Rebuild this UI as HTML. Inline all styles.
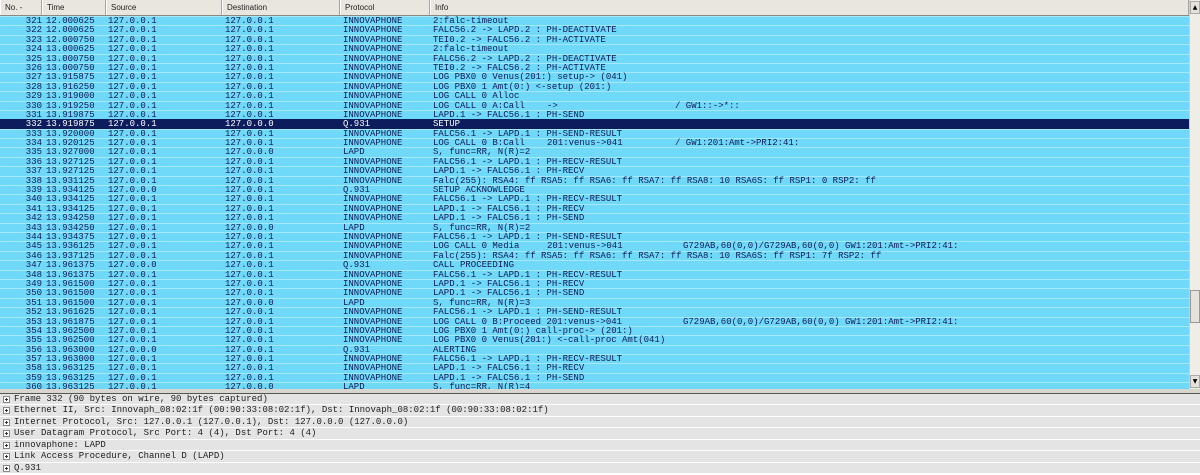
<!DOCTYPE html>
<html><head><meta charset="utf-8">
<style>
*{margin:0;padding:0;box-sizing:border-box}
body{width:1200px;height:475px;overflow:hidden;background:#fff;position:relative;font-family:"Liberation Mono",monospace}
#hdr{position:absolute;left:0;top:0;width:1189px;height:16px;background:#e8e6de;border-bottom:1px solid #8a8880;font:8px "Liberation Sans",sans-serif;color:#222}
#hdr div{position:absolute;top:0;height:15px;line-height:15px;padding-left:4px;border-right:1px solid #a8a69e;border-left:1px solid #fff}
#list{position:absolute;left:0;top:16px;width:1189px;height:374px;background:#70d8f8;overflow:hidden}
.r{height:9.4px;position:relative;border-top:1px solid #a4e8fc;font-size:9px;line-height:8px;color:#101c58;white-space:pre}
.r.sel{background:#0c1c5c;color:#fff;border-top-color:#0c1c5c}
.r span{position:absolute;top:0}
.no{left:0;width:42px;text-align:right}
.t{left:46px}.s{left:108px}.d{left:225px}.p{left:343px}.i{left:433px}
.b{left:547px}.c{left:675px}.e{left:683px}
#sb{position:absolute;left:1189px;top:0;width:11px;height:390px;background:#eeede6;border-left:1px solid #ccc}
#sb .a{position:absolute;left:0;width:10px;height:13px;background:#e4e2da;border:1px solid #aaa;font-size:6px;line-height:11px;text-align:center;color:#000;font-family:"DejaVu Sans",sans-serif}
#sb .th{position:absolute;left:0;top:290px;width:10px;height:33px;background:#e4e2da;border:1px solid #999}
#split{position:absolute;left:0;top:389px;width:1200px;height:5px;background:#d8d6ce;border-bottom:1px solid #555}
#tree{position:absolute;left:0;top:394px;width:1200px}
.n{height:11.45px;background:#e4e4e4;border-bottom:1px solid #fff;font-size:9px;line-height:10px;color:#222;padding-left:14px;position:relative;white-space:pre}
.n i{position:absolute;left:3px;top:2px;width:7px;height:7px;border:1px solid #888;background:#fff}
.n i:before{content:"";position:absolute;left:1px;top:2px;width:3px;height:1px;background:#333}
.n i:after{content:"";position:absolute;left:2px;top:1px;width:1px;height:3px;background:#333}
</style></head><body>
<div id="hdr">
<div style="left:0;width:42px">No. -</div>
<div style="left:42px;width:64px">Time</div>
<div style="left:106px;width:116px">Source</div>
<div style="left:222px;width:118px">Destination</div>
<div style="left:340px;width:90px">Protocol</div>
<div style="left:430px;width:759px">Info</div>
</div>
<div id="list">
<div class="r"><span class="no">321</span><span class="t">12.000625</span><span class="s">127.0.0.1</span><span class="d">127.0.0.1</span><span class="p">INNOVAPHONE</span><span class="i">2:falc-timeout</span></div>
<div class="r"><span class="no">322</span><span class="t">12.000625</span><span class="s">127.0.0.1</span><span class="d">127.0.0.1</span><span class="p">INNOVAPHONE</span><span class="i">FALC56.2 -> LAPD.2 : PH-DEACTIVATE</span></div>
<div class="r"><span class="no">323</span><span class="t">12.000750</span><span class="s">127.0.0.1</span><span class="d">127.0.0.1</span><span class="p">INNOVAPHONE</span><span class="i">TEI0.2 -> FALC56.2 : PH-ACTIVATE</span></div>
<div class="r"><span class="no">324</span><span class="t">13.000625</span><span class="s">127.0.0.1</span><span class="d">127.0.0.1</span><span class="p">INNOVAPHONE</span><span class="i">2:falc-timeout</span></div>
<div class="r"><span class="no">325</span><span class="t">13.000750</span><span class="s">127.0.0.1</span><span class="d">127.0.0.1</span><span class="p">INNOVAPHONE</span><span class="i">FALC56.2 -> LAPD.2 : PH-DEACTIVATE</span></div>
<div class="r"><span class="no">326</span><span class="t">13.000750</span><span class="s">127.0.0.1</span><span class="d">127.0.0.1</span><span class="p">INNOVAPHONE</span><span class="i">TEI0.2 -> FALC56.2 : PH-ACTIVATE</span></div>
<div class="r"><span class="no">327</span><span class="t">13.915875</span><span class="s">127.0.0.1</span><span class="d">127.0.0.1</span><span class="p">INNOVAPHONE</span><span class="i">LOG PBX0 0 Venus(201:) setup-> (041)</span></div>
<div class="r"><span class="no">328</span><span class="t">13.916250</span><span class="s">127.0.0.1</span><span class="d">127.0.0.1</span><span class="p">INNOVAPHONE</span><span class="i">LOG PBX0 1 Amt(0:) &lt;-setup (201:)</span></div>
<div class="r"><span class="no">329</span><span class="t">13.919000</span><span class="s">127.0.0.1</span><span class="d">127.0.0.1</span><span class="p">INNOVAPHONE</span><span class="i">LOG CALL 0 Alloc</span></div>
<div class="r"><span class="no">330</span><span class="t">13.919250</span><span class="s">127.0.0.1</span><span class="d">127.0.0.1</span><span class="p">INNOVAPHONE</span><span class="i">LOG CALL 0 A:Call</span><span class="b">-></span><span class="c">/ GW1::->*::</span></div>
<div class="r"><span class="no">331</span><span class="t">13.919875</span><span class="s">127.0.0.1</span><span class="d">127.0.0.1</span><span class="p">INNOVAPHONE</span><span class="i">LAPD.1 -> FALC56.1 : PH-SEND</span></div>
<div class="r sel"><span class="no">332</span><span class="t">13.919875</span><span class="s">127.0.0.1</span><span class="d">127.0.0.0</span><span class="p">Q.931</span><span class="i">SETUP</span></div>
<div class="r"><span class="no">333</span><span class="t">13.920000</span><span class="s">127.0.0.1</span><span class="d">127.0.0.1</span><span class="p">INNOVAPHONE</span><span class="i">FALC56.1 -> LAPD.1 : PH-SEND-RESULT</span></div>
<div class="r"><span class="no">334</span><span class="t">13.920125</span><span class="s">127.0.0.1</span><span class="d">127.0.0.1</span><span class="p">INNOVAPHONE</span><span class="i">LOG CALL 0 B:Call</span><span class="b">201:venus->041</span><span class="c">/ GW1:201:Amt->PRI2:41:</span></div>
<div class="r"><span class="no">335</span><span class="t">13.927000</span><span class="s">127.0.0.1</span><span class="d">127.0.0.0</span><span class="p">LAPD</span><span class="i">S, func=RR, N(R)=2</span></div>
<div class="r"><span class="no">336</span><span class="t">13.927125</span><span class="s">127.0.0.1</span><span class="d">127.0.0.1</span><span class="p">INNOVAPHONE</span><span class="i">FALC56.1 -> LAPD.1 : PH-RECV-RESULT</span></div>
<div class="r"><span class="no">337</span><span class="t">13.927125</span><span class="s">127.0.0.1</span><span class="d">127.0.0.1</span><span class="p">INNOVAPHONE</span><span class="i">LAPD.1 -> FALC56.1 : PH-RECV</span></div>
<div class="r"><span class="no">338</span><span class="t">13.931125</span><span class="s">127.0.0.1</span><span class="d">127.0.0.1</span><span class="p">INNOVAPHONE</span><span class="i">Falc(255): RSA4: ff RSA5: ff RSA6: ff RSA7: ff RSA8: 10 RSA6S: ff RSP1: 0 RSP2: ff</span></div>
<div class="r"><span class="no">339</span><span class="t">13.934125</span><span class="s">127.0.0.0</span><span class="d">127.0.0.1</span><span class="p">Q.931</span><span class="i">SETUP ACKNOWLEDGE</span></div>
<div class="r"><span class="no">340</span><span class="t">13.934125</span><span class="s">127.0.0.1</span><span class="d">127.0.0.1</span><span class="p">INNOVAPHONE</span><span class="i">FALC56.1 -> LAPD.1 : PH-RECV-RESULT</span></div>
<div class="r"><span class="no">341</span><span class="t">13.934125</span><span class="s">127.0.0.1</span><span class="d">127.0.0.1</span><span class="p">INNOVAPHONE</span><span class="i">LAPD.1 -> FALC56.1 : PH-RECV</span></div>
<div class="r"><span class="no">342</span><span class="t">13.934250</span><span class="s">127.0.0.1</span><span class="d">127.0.0.1</span><span class="p">INNOVAPHONE</span><span class="i">LAPD.1 -> FALC56.1 : PH-SEND</span></div>
<div class="r"><span class="no">343</span><span class="t">13.934250</span><span class="s">127.0.0.1</span><span class="d">127.0.0.0</span><span class="p">LAPD</span><span class="i">S, func=RR, N(R)=2</span></div>
<div class="r"><span class="no">344</span><span class="t">13.934375</span><span class="s">127.0.0.1</span><span class="d">127.0.0.1</span><span class="p">INNOVAPHONE</span><span class="i">FALC56.1 -> LAPD.1 : PH-SEND-RESULT</span></div>
<div class="r"><span class="no">345</span><span class="t">13.936125</span><span class="s">127.0.0.1</span><span class="d">127.0.0.1</span><span class="p">INNOVAPHONE</span><span class="i">LOG CALL 0 Media</span><span class="b">201:venus->041</span><span class="e">G729AB,60(0,0)/G729AB,60(0,0) GW1:201:Amt->PRI2:41:</span></div>
<div class="r"><span class="no">346</span><span class="t">13.937125</span><span class="s">127.0.0.1</span><span class="d">127.0.0.1</span><span class="p">INNOVAPHONE</span><span class="i">Falc(255): RSA4: ff RSA5: ff RSA6: ff RSA7: ff RSA8: 10 RSA6S: ff RSP1: 7f RSP2: ff</span></div>
<div class="r"><span class="no">347</span><span class="t">13.961375</span><span class="s">127.0.0.0</span><span class="d">127.0.0.1</span><span class="p">Q.931</span><span class="i">CALL PROCEEDING</span></div>
<div class="r"><span class="no">348</span><span class="t">13.961375</span><span class="s">127.0.0.1</span><span class="d">127.0.0.1</span><span class="p">INNOVAPHONE</span><span class="i">FALC56.1 -> LAPD.1 : PH-RECV-RESULT</span></div>
<div class="r"><span class="no">349</span><span class="t">13.961500</span><span class="s">127.0.0.1</span><span class="d">127.0.0.1</span><span class="p">INNOVAPHONE</span><span class="i">LAPD.1 -> FALC56.1 : PH-RECV</span></div>
<div class="r"><span class="no">350</span><span class="t">13.961500</span><span class="s">127.0.0.1</span><span class="d">127.0.0.1</span><span class="p">INNOVAPHONE</span><span class="i">LAPD.1 -> FALC56.1 : PH-SEND</span></div>
<div class="r"><span class="no">351</span><span class="t">13.961500</span><span class="s">127.0.0.1</span><span class="d">127.0.0.0</span><span class="p">LAPD</span><span class="i">S, func=RR, N(R)=3</span></div>
<div class="r"><span class="no">352</span><span class="t">13.961625</span><span class="s">127.0.0.1</span><span class="d">127.0.0.1</span><span class="p">INNOVAPHONE</span><span class="i">FALC56.1 -> LAPD.1 : PH-SEND-RESULT</span></div>
<div class="r"><span class="no">353</span><span class="t">13.961875</span><span class="s">127.0.0.1</span><span class="d">127.0.0.1</span><span class="p">INNOVAPHONE</span><span class="i">LOG CALL 0 B:Proceed 201:venus->041</span><span class="e">G729AB,60(0,0)/G729AB,60(0,0) GW1:201:Amt->PRI2:41:</span></div>
<div class="r"><span class="no">354</span><span class="t">13.962500</span><span class="s">127.0.0.1</span><span class="d">127.0.0.1</span><span class="p">INNOVAPHONE</span><span class="i">LOG PBX0 1 Amt(0:) call-proc-> (201:)</span></div>
<div class="r"><span class="no">355</span><span class="t">13.962500</span><span class="s">127.0.0.1</span><span class="d">127.0.0.1</span><span class="p">INNOVAPHONE</span><span class="i">LOG PBX0 0 Venus(201:) &lt;-call-proc Amt(041)</span></div>
<div class="r"><span class="no">356</span><span class="t">13.963000</span><span class="s">127.0.0.0</span><span class="d">127.0.0.1</span><span class="p">Q.931</span><span class="i">ALERTING</span></div>
<div class="r"><span class="no">357</span><span class="t">13.963000</span><span class="s">127.0.0.1</span><span class="d">127.0.0.1</span><span class="p">INNOVAPHONE</span><span class="i">FALC56.1 -> LAPD.1 : PH-RECV-RESULT</span></div>
<div class="r"><span class="no">358</span><span class="t">13.963125</span><span class="s">127.0.0.1</span><span class="d">127.0.0.1</span><span class="p">INNOVAPHONE</span><span class="i">LAPD.1 -> FALC56.1 : PH-RECV</span></div>
<div class="r"><span class="no">359</span><span class="t">13.963125</span><span class="s">127.0.0.1</span><span class="d">127.0.0.1</span><span class="p">INNOVAPHONE</span><span class="i">LAPD.1 -> FALC56.1 : PH-SEND</span></div>
<div class="r"><span class="no">360</span><span class="t">13.963125</span><span class="s">127.0.0.1</span><span class="d">127.0.0.0</span><span class="p">LAPD</span><span class="i">S, func=RR, N(R)=4</span></div>
</div>
<div id="sb"><div class="a" style="top:1px">▲</div><div class="th"></div><div class="a" style="top:375px">▼</div></div>
<div id="split"></div>
<div id="tree">
<div class="n"><i></i>Frame 332 (90 bytes on wire, 90 bytes captured)</div>
<div class="n"><i></i>Ethernet II, Src: Innovaph_08:02:1f (00:90:33:08:02:1f), Dst: Innovaph_08:02:1f (00:90:33:08:02:1f)</div>
<div class="n"><i></i>Internet Protocol, Src: 127.0.0.1 (127.0.0.1), Dst: 127.0.0.0 (127.0.0.0)</div>
<div class="n"><i></i>User Datagram Protocol, Src Port: 4 (4), Dst Port: 4 (4)</div>
<div class="n"><i></i>innovaphone: LAPD</div>
<div class="n"><i></i>Link Access Procedure, Channel D (LAPD)</div>
<div class="n"><i></i>Q.931</div>
</div>
</body></html>
